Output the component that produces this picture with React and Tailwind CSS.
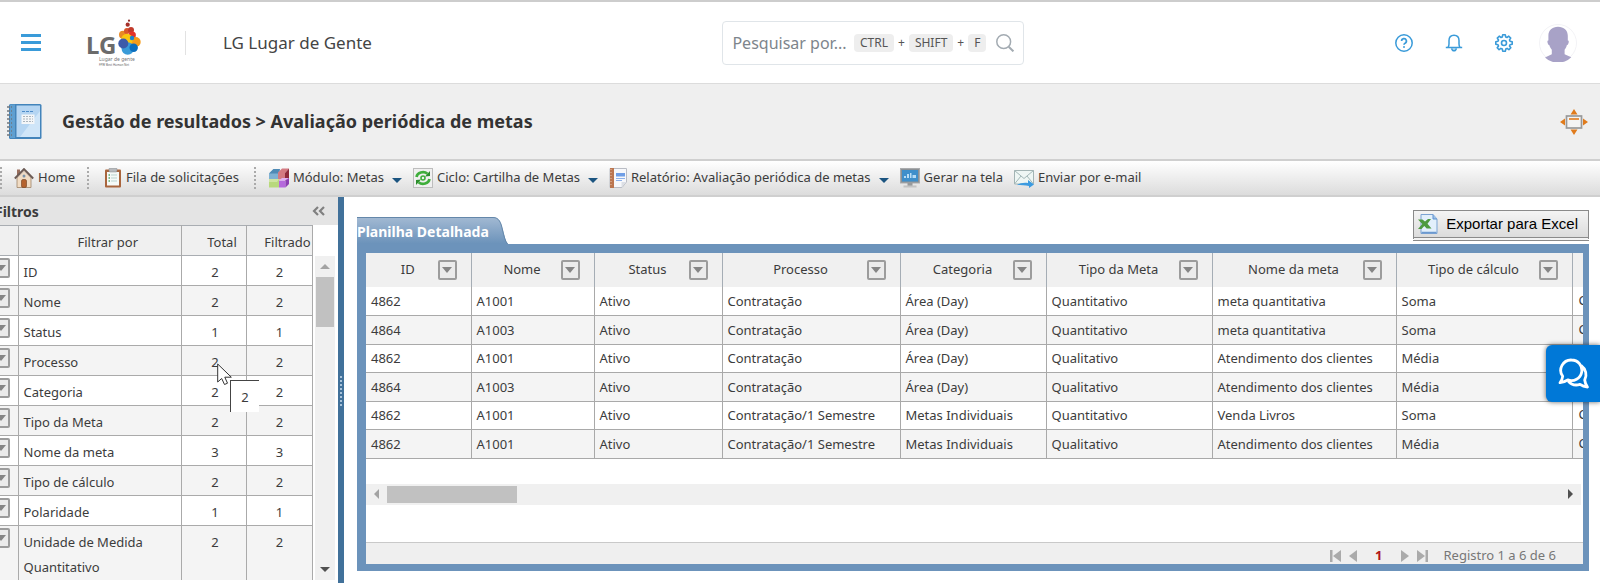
import React, { useState } from 'react';

const filtros = [
    { nome: 'ID', total: 2, filtrado: 2 },
    { nome: 'Nome', total: 2, filtrado: 2 },
    { nome: 'Status', total: 1, filtrado: 1 },
    { nome: 'Processo', total: 2, filtrado: 2 },
    { nome: 'Categoria', total: 2, filtrado: 2 },
    { nome: 'Tipo da Meta', total: 2, filtrado: 2 },
    { nome: 'Nome da meta', total: 3, filtrado: 3 },
    { nome: 'Tipo de cálculo', total: 2, filtrado: 2 },
    { nome: 'Polaridade', total: 1, filtrado: 1 },
    { nome: 'Unidade de Medida Quantitativo', total: 2, filtrado: 2 },
];

const colunas = [
    { nome: 'ID', largura: 'w-[105px]' },
    { nome: 'Nome', largura: 'w-[123px]' },
    { nome: 'Status', largura: 'w-[128px]' },
    { nome: 'Processo', largura: 'w-[178px]' },
    { nome: 'Categoria', largura: 'w-[146px]' },
    { nome: 'Tipo da Meta', largura: 'w-[166px]' },
    { nome: 'Nome da meta', largura: 'w-[184px]' },
    { nome: 'Tipo de cálculo', largura: 'w-[176px]' },
];

const linhas = [
    ['4862', 'A1001', 'Ativo', 'Contratação', 'Área (Day)', 'Quantitativo', 'meta quantitativa', 'Soma'],
    ['4864', 'A1003', 'Ativo', 'Contratação', 'Área (Day)', 'Quantitativo', 'meta quantitativa', 'Soma'],
    ['4862', 'A1001', 'Ativo', 'Contratação', 'Área (Day)', 'Qualitativo', 'Atendimento dos clientes', 'Média'],
    ['4864', 'A1003', 'Ativo', 'Contratação', 'Área (Day)', 'Qualitativo', 'Atendimento dos clientes', 'Média'],
    ['4862', 'A1001', 'Ativo', 'Contratação/1 Semestre', 'Metas Individuais', 'Quantitativo', 'Venda Livros', 'Soma'],
    ['4862', 'A1001', 'Ativo', 'Contratação/1 Semestre', 'Metas Individuais', 'Qualitativo', 'Atendimento dos clientes', 'Média'],
];

/* ---------- Ícones ---------- */

const Logo = () => (
    <svg width="54" height="50" viewBox="0 0 54 50" role="img" aria-label="LG Lugar de Gente">
        <text x="-1" y="36" fontFamily="Noto Sans, sans-serif" fontWeight="700" fontSize="24" fill="#6b6b6b">LG</text>
        <circle cx="42" cy="2.700" r="1.100" fill="#8e2a25" />
        <circle cx="40.700" cy="6.700" r="2.100" fill="#a5302a" />
        <circle cx="36" cy="16.700" r="4" fill="#e98a24" />
        <circle cx="40" cy="13" r="3" fill="#d9562b" />
        <circle cx="44" cy="12" r="3" fill="#c23b2c" />
        <circle cx="45.300" cy="17" r="3.600" fill="#e6332a" />
        <circle cx="48.700" cy="24" r="5" fill="#f59c1a" />
        <circle cx="40" cy="21.500" r="5.800" fill="#fbc70f" />
        <circle cx="40.700" cy="30.500" r="6.200" fill="#3a9bd8" />
        <circle cx="36.300" cy="25.500" r="5" fill="#3d5ba9" />
        <circle cx="46.700" cy="29.700" r="4.200" fill="#0a6ebd" />
        <circle cx="45" cy="20" r="2.200" fill="#1b87cf" />
        <text x="12" y="43" fontFamily="Noto Sans, sans-serif" fontSize="5" fill="#777">Lugar de gente</text>
        <text x="12" y="48" fontFamily="Noto Sans, sans-serif" fontSize="3" fill="#666">FPW Best Human Net</text>
    </svg>
);

const HelpIcon = () => (
    <svg width="18" height="18" viewBox="0 0 18 18" fill="none" stroke="#3a9bd9" strokeWidth="1.500">
        <circle cx="9" cy="9" r="8.200" />
        <path d="M6.600 7.100a2.400 2.400 0 1 1 3.500 2.100c-.8.4-1.100.8-1.100 1.500" strokeWidth="1.700" />
        <path d="M9 12.200v1.600" strokeWidth="1.900" />
    </svg>
);

const BellIcon = () => (
    <svg width="18" height="18" viewBox="0 0 18 18" fill="none" stroke="#3a9bd9" strokeWidth="1.500">
        <path d="M.8 13.600h16.400M3 13.400c.7-1 1-2 1-3.400V6.500C4 3 6 1.200 9 1.200s5 1.800 5 5.300V10c0 1.400.3 2.400 1 3.400" />
        <path d="M6.600 14.300c.3 1.500 1.200 2.500 2.400 2.500s2.100-1 2.400-2.500" fill="#3a9bd9" fillOpacity=".4" />
    </svg>
);

const GearIcon = () => (
    <svg width="18" height="18" viewBox="0 0 18 18" fill="none" stroke="#3a9bd9" strokeWidth="1.600" strokeLinejoin="round">
        <circle cx="9" cy="9" r="2.500" />
        <path d="M7.700.8h2.600l.4 2.200 1.300.5 1.800-1.300 1.900 1.900-1.200 1.800.5 1.300 2.200.5v2.600l-2.200.4-.5 1.300 1.300 1.800-1.900 1.900-1.800-1.300-1.300.6-.5 2.200H7.700l-.4-2.200-1.400-.6-1.800 1.300-1.900-1.900L3.500 12 3 10.700l-2.200-.4V7.700L3 7.300 3.500 6 2.300 4.100l1.900-1.900L6 3.500 7.300 3z" />
    </svg>
);

const Avatar = () => (
    <svg width="38" height="38" viewBox="0 0 38 38">
        <circle cx="19" cy="19" r="18.500" fill="#fff" stroke="#f3f3f6" />
        <path d="M19 2.700c-6 0-9.800 3.800-9.600 9.500v4.300c-1 0-1.200 1-.8 2.300.4 1.500.9 2.300 1.800 2.500.6 2 1.400 3.400 2.400 4.500v4.500L6 33.400A19 19 0 0 0 32.300 33.200L25.600 30.300v-4.500c1-1.100 1.700-2.500 2.200-4.500.9-.2 1.400-1 1.800-2.500.4-1.300.2-2.300-.8-2.300v-4.300C29 6.500 25 2.700 19 2.700z" fill="#a8a2c7" />
    </svg>
);

const NotebookIcon = () => (
    <svg width="36" height="37" viewBox="0 0 36 37">
        <rect x="3" y="1" width="32.500" height="35" rx="1.500" fill="#4384bb" />
        <rect x="4" y="1.500" width="5" height="33.500" fill="#5f9fd0" />
        <rect x="10.500" y="2.500" width="23.500" height="31.500" fill="#b5d5f2" />
        <path d="M34 8v26H14z" fill="#cfe5f8" />
        <path d="M16 8.500h12" stroke="#4f8cc9" strokeDasharray="3 1" />
        <rect x="15.500" y="11.500" width="13" height="9.500" fill="#f4f6f8" />
        <path d="M17 13.500h10M17 16h10M17 18.500h10" stroke="#a9b4bd" strokeDasharray="2 1" />
        <path d="M1 4h5M1 8h5M1 12h5M1 16h5M1 20h5M1 24h5M1 28h5M1 32h5" stroke="#70777d" strokeWidth="1.600" strokeDasharray="3 1" />
    </svg>
);

const ExpandIcon = () => (
    <svg width="28" height="26" viewBox="0 0 28 26">
        <path d="M14 0l3.500 5.500h-7zM14 26l3.500-5.500h-7zM0 13l5-3.500v7zM28 13l-5-3.500v7z" fill="#e07b1c" />
        <rect x="6.500" y="7" width="15" height="12" fill="#f4f4f4" stroke="#999" strokeWidth="1.700" />
        <path d="M9 10h10" stroke="#e07b1c" strokeWidth="1.600" />
    </svg>
);

const HouseIcon = () => (
    <svg width="20" height="20" viewBox="0 0 20 20">
        <path d="M3 1.500h3V7H3z" fill="#9a6f5e" />
        <path d="M3 10l7-7.500L17 10v9.500H3z" fill="#f1dcc4" stroke="#a08468" strokeWidth=".8" />
        <path d="M.8 10.500L10 1l9.200 9.500" fill="none" stroke="#6b5a54" strokeWidth="1.800" />
        <path d="M4 9.500l6-6 6 6" fill="none" stroke="#d8cdc6" strokeWidth=".8" />
        <rect x="7.500" y="11.500" width="5" height="8" rx="1.500" fill="#b5622d" stroke="#71401e" strokeWidth=".6" />
        <circle cx="10" cy="8" r="1.500" fill="#7c93a8" />
    </svg>
);

const ClipboardIcon = () => (
    <svg width="18" height="20" viewBox="0 0 18 20">
        <rect x="1" y="1.500" width="16" height="18" rx="1" fill="#a9653d" />
        <rect x="3" y="4" width="12" height="13.500" fill="#f6faf8" />
        <rect x="5" y="0" width="8" height="4" rx="1" fill="#b8babd" stroke="#85888c" strokeWidth=".5" />
        <path d="M4.500 7h1.500M4.500 10h1.500M4.500 13h1.500" stroke="#5aa96a" strokeWidth="1.300" />
        <path d="M7 7h6M7 10h6M7 13h6" stroke="#b9d3cf" />
    </svg>
);

const CubesIcon = () => (
    <svg width="20" height="20" viewBox="0 0 20 20">
        <path d="M0 5.500L4.500 1H11v10H0z" fill="#7fb1d3" />
        <path d="M0 5.500L4.500 1H11l-2 4.500z" fill="#4f8ab5" />
        <path d="M9 4.500L13 .5h7L16 5v6.500H9z" fill="#d47a82" />
        <path d="M16 5l4-4.500V10l-4 3z" fill="#8f2a3c" />
        <path d="M0 11h10v8.500H0z" fill="#b8d97c" />
        <path d="M0 11h10l-2 3H0z" fill="#cfe5a3" />
        <path d="M10 12.500h6.500v7H10z" fill="#b569dc" />
        <path d="M10 12.500l3-2.500h7l-3.500 2.500z" fill="#e0b0f2" />
        <path d="M16.500 12.500L20 10v6l-3.500 3.500z" fill="#8e3fb4" />
    </svg>
);

const CycleIcon = () => (
    <svg width="20" height="20" viewBox="0 0 20 20" fill="none">
        <rect x=".5" y=".5" width="19" height="19" fill="#f0f0f0" stroke="#bdbdbd" />
        <path d="M3.500 9A6.500 5.500 0 0 1 14.500 5.800M16.500 11A6.500 5.500 0 0 1 5.500 14.200" stroke="#3fae3b" strokeWidth="2.600" />
        <path d="M12 8.500l5-.5V3zM8 11.500L3 12v5z" fill="#2c8d2c" />
        <circle cx="10" cy="10" r="2" stroke="#3fae3b" strokeWidth="1.600" />
    </svg>
);

const ReportIcon = () => (
    <svg width="18" height="20" viewBox="0 0 18 20">
        <path d="M1 .5h16.500V14L13 19.500H1z" fill="#f7f8fb" stroke="#b9bcc4" />
        <rect x="1" y="0" width="4" height="20" fill="#bb7650" />
        <path d="M2 1v18" stroke="#e6c2a9" strokeDasharray="1 2" />
        <rect x="7" y="5" width="9" height="3.500" fill="#6f9ee6" />
        <path d="M7 10.500h9M7 12.500h6" stroke="#8db1ea" />
        <path d="M12.500 19.500V14h5z" fill="#dcdfe5" />
    </svg>
);

const MonitorIcon = () => (
    <svg width="20" height="20" viewBox="0 0 20 20">
        <rect x=".5" y=".5" width="19" height="14.500" fill="#8c9094" stroke="#a9abad" />
        <rect x="2" y="2" width="16" height="11.500" fill="#3f8fcb" />
        <path d="M4 10V8h2v2zM7 10V6h2v4zM10 10V5h1.500v5zM12.500 10V7H16v3z" fill="#b8dcf5" />
        <path d="M7.500 15h5v3h-5z" fill="#97999b" />
        <path d="M3.500 18.500h13" stroke="#c3c3c3" strokeWidth="2" />
    </svg>
);

const MailIcon = () => (
    <svg width="20" height="20" viewBox="0 0 20 20">
        <path d="M.5 2.500h19V16H.5z" fill="#eef6f4" stroke="#a3b4b4" />
        <path d="M.5 2.500l9.500 8 9.500-8M.5 16l6.500-8M19.500 16L13 8" fill="none" stroke="#a3b8b8" />
        <path d="M3 17c3-2 7-2.500 11-2v-3l6 4.500-5 3.500v-2c-4-.8-8-.8-12-1z" fill="#3c9be0" />
    </svg>
);

const ExcelIcon = () => (
    <svg width="20" height="20" viewBox="0 0 20 20">
        <path d="M3 .5h12L19 5v14.500H3z" fill="#e2effb" stroke="#7ba3d3" />
        <path d="M15 .5V5h4" fill="#9fc1e8" stroke="#5f93cf" />
        <path d="M3.500 18.500h15" stroke="#6c99cf" strokeWidth="1.500" />
        <path d="M0 5.500h4.500l2.500 2 3-2.500h3L9.500 9.800l4 4.700H8.700L6.300 12 3.500 15H0l4.300-5z" fill="#4d9a3f" />
    </svg>
);

const ChatIcon = () => (
    <svg width="32" height="32" viewBox="0 0 32 32" fill="none" stroke="#fff" strokeWidth="2.800" strokeLinejoin="round">
        <path d="M13.500 2a10.300 10.300 0 1 1-3.700 19.900c-2 1.400-4.500 2.300-7.800 2.800 1.600-2.200 2.600-4.200 2.700-6.400A10.300 10.300 0 0 1 13.500 2z" />
        <path d="M23 7.500c5 3.700 6.300 9.500 3.700 14.500.3 2.700 1.200 5 2.800 7-2.800-.2-5.300-1-7.500-2.600-4.500 1.300-8.800.4-12-3.600" />
    </svg>
);

/* ---------- Componentes ---------- */

const FilterButton = ({ label }) => (
    <button
        aria-label={label}
        className="flex h-5 w-[19px] shrink-0 items-center justify-center rounded-xs border-2 border-[#9c9c9c] bg-[#ebebeb]"
    >
        <span className="border-x-[5px] border-t-[6px] border-x-transparent border-t-[#858585]" />
    </button>
);

const ToolbarItem = ({ icon: Icon, label, menu }) => (
    <button className="flex items-center gap-1 whitespace-nowrap">
        <Icon />
        <span>{label}</span>
        {menu && <span className="ml-1 mt-1 border-x-[5px] border-t-[5px] border-x-transparent border-t-[#1b5480]" />}
    </button>
);

const Separator = () => <span className="h-[22px] border-l-2 border-dotted border-[#aaa]" />;

const Header = () => (
    <header className="flex h-[84px] items-center border-t-2 border-b border-t-[#cdcdcd] border-b-[#dcdcdc] bg-white pl-[21px] pr-[23px] shadow-sm">
        <button aria-label="Menu" className="flex w-5 flex-col gap-1">
            <span className="h-[3px] bg-[#3a9bd9]" />
            <span className="h-[3px] bg-[#3a9bd9]" />
            <span className="h-[3px] bg-[#3a9bd9]" />
        </button>
        <div className="ml-[46px]">
            <Logo />
        </div>
        <div className="ml-11 h-6 w-px bg-[#e2e2e2]" />
        <span className="ml-[37px] text-[17px] text-[#444]">LG Lugar de Gente</span>

        <label className="ml-auto flex h-11 w-[302px] items-center rounded border border-[#e0e5e9] px-[9px]">
            <input
                aria-label="Pesquisar"
                placeholder="Pesquisar por..."
                className="min-w-0 flex-1 text-[16px] text-[#6c757d] outline-none placeholder:text-[#7d858c]"
            />
            <span className="flex items-center gap-1 text-[12px] text-[#555]">
                <kbd className="rounded bg-[#eee] px-1.5 font-[inherit]">CTRL</kbd>+
                <kbd className="rounded bg-[#eee] px-1.5 font-[inherit]">SHIFT</kbd>+
                <kbd className="rounded bg-[#eee] px-1.5 font-[inherit]">F</kbd>
            </span>
            <svg width="18" height="18" viewBox="0 0 18 18" className="ml-2.5" fill="none" stroke="#a3abb2" strokeWidth="1.500">
                <circle cx="7.700" cy="7.700" r="6.900" />
                <path d="M12.700 12.700l4.700 4.700" strokeWidth="2" />
            </svg>
        </label>

        <div className="ml-auto flex items-center gap-8 pl-5">
            <button aria-label="Ajuda"><HelpIcon /></button>
            <button aria-label="Notificações"><BellIcon /></button>
            <button aria-label="Configurações"><GearIcon /></button>
            <button aria-label="Perfil" className="-ml-1.5"><Avatar /></button>
        </div>
    </header>
);

const Sidebar = () => (
    <aside className="relative w-[338px] shrink-0 overflow-hidden">
        {/* O painel começa um pouco além da borda esquerda da janela */}
        <div className="-ml-[9px]">
            <div className="flex h-7 items-center justify-between bg-[#e4e4e4] pl-1 pr-[13px]">
                <h2 className="text-[14px] font-bold">Filtros</h2>
                <button aria-label="Recolher filtros">
                    <svg width="13" height="10" viewBox="0 0 13 10" fill="none" stroke="#808080" strokeWidth="2.200">
                        <path d="M6 1L2 5l4 4M12 1L8 5l4 4" />
                    </svg>
                </button>
            </div>
            <div className="flex">
                <table className="w-[322px] table-fixed border-collapse">
                    <thead>
                        <tr className="h-[30px] border-y border-[#a9adb2] bg-[#f0f0f0]">
                            <th className="w-[27px] border-r border-[#aaa]"><span className="sr-only">Opções</span></th>
                            <th className="border-r border-[#aaa] pl-4 pt-1 font-normal">Filtrar por</th>
                            <th className="w-[65px] border-r border-[#aaa] pl-4 pt-1 font-normal">Total</th>
                            <th className="w-[66px] border-r border-[#aaa] pl-4 pt-1 font-normal">Filtrado</th>
                        </tr>
                    </thead>
                    <tbody>
                        {filtros.map((f) => (
                            <tr key={f.nome} className="h-[30px] border-b border-[#aaa] align-top leading-[25px] even:bg-[#f4f4f4] last:border-0">
                                <td className="border-r border-[#aaa] pt-0.5"><FilterButton label={`Filtrar ${f.nome}`} /></td>
                                <td className="border-r border-[#aaa] pl-[5px] pt-1">{f.nome}</td>
                                <td className="border-r border-[#aaa] pl-0.5 pt-1 text-center">{f.total}</td>
                                <td className="border-r border-[#aaa] pt-1 text-center">{f.filtrado}</td>
                            </tr>
                        ))}
                    </tbody>
                </table>
                <div className="ml-0.5 mt-[31px] flex w-5 flex-col items-center bg-[#f0f0f0] py-2">
                    <span className="border-x-[5px] border-b-[5px] border-x-transparent border-b-[#a3a3a3]" />
                    <span className="mt-2 h-[50px] w-[18px] bg-[#c1c1c1]" />
                    <span className="mt-auto border-x-[5px] border-t-[5px] border-x-transparent border-t-[#505050]" />
                </div>
            </div>
        </div>

        {/* Cursor e dica flutuante */}
        <svg className="absolute left-[217px] top-[166px]" width="16" height="23" viewBox="0 0 16 23">
            <path d="M.7 1v18l4-3.500 2.800 6 3-1.300-2.700-6h6.500z" fill="#fff" stroke="#333" />
        </svg>
        <div role="tooltip" className="absolute left-[230px] top-[183px] h-8 w-[29px] border-l border-t border-[#444] bg-white text-center leading-8">
            2
        </div>
    </aside>
);

const Planilha = () => (
    <main className="flex min-w-0 flex-1 flex-col pb-3 pl-[13px] pr-[11px]">
        <div className="flex h-[47px] items-end justify-between">
            <div className="relative flex h-[27px] w-[151px] items-center pt-0.5">
                <svg className="absolute inset-0" width="151" height="27" viewBox="0 0 151 27">
                    <defs>
                        <linearGradient id="aba" x1="0" y1="0" x2="0" y2="1">
                            <stop offset="0" stopColor="#a3bad3" />
                            <stop offset="1" stopColor="#6b92ba" />
                        </linearGradient>
                    </defs>
                    <path d="M0 0h136c6 0 8 5 10 13 1.500 6 2.500 11 5 14H0z" fill="url(#aba)" />
                    <path d="M0 .5h136c6 0 8 5 9.500 12.500 1.500 6 2.500 11 5 14" fill="none" stroke="#6487aa" />
                </svg>
                <h2 className="relative whitespace-nowrap text-[14px] font-bold text-white">Planilha Detalhada</h2>
            </div>
            <button className="mb-[3px] flex h-[31px] items-center gap-2 border border-b-4 border-double border-[#8a8a8a] bg-linear-to-b from-[#f4f4f4] to-[#dcdcdc] pl-1 pr-2.5 font-['Liberation_Sans',sans-serif] text-[15px] text-black">
                <ExcelIcon />
                Exportar para Excel
            </button>
        </div>

        <div className="flex h-[327px] flex-col border-[#6c93bb] border-b-[7px] border-l-[9px] border-r-[6px] border-t-[9px] bg-white">
            <div className="overflow-hidden">
                <table className="w-[1400px] table-fixed border-collapse">
                    <thead>
                        <tr className="h-[34px] bg-[#f0f0f0]">
                            {colunas.map((c) => (
                                <th key={c.nome} className={`${c.largura} border-r border-[#a5adb5] p-0 pl-3 pr-3.5 font-normal`}>
                                    <span className="flex items-center">
                                        <span className="flex-1">{c.nome}</span>
                                        <FilterButton label={`Filtrar ${c.nome}`} />
                                    </span>
                                </th>
                            ))}
                            <th />
                        </tr>
                    </thead>
                    <tbody>
                        {linhas.map((linha, i) => (
                            <tr key={i} className="h-7 border-b border-[#a9a9a9] even:h-[29px] even:bg-[#f4f4f4]">
                                {linha.map((valor, j) => (
                                    <td key={j} className="whitespace-nowrap border-r border-[#a9a9a9] p-0 pl-[5px] pt-0.5">{valor}</td>
                                ))}
                                <td className="p-0 pl-1.5">Crescente</td>
                            </tr>
                        ))}
                    </tbody>
                </table>
            </div>

            <div className="mr-0.5 mt-[25px] flex h-[21px] items-center bg-[#f0f0f0] pl-2 pr-2">
                <span className="border-y-[5px] border-r-[5px] border-y-transparent border-r-[#a3a3a3]" />
                <span className="ml-2 h-[17px] w-[130px] bg-[#c1c1c1]" />
                <span className="ml-auto border-y-[5px] border-l-[5px] border-y-transparent border-l-[#505050]" />
            </div>

            <footer className="mt-auto flex h-[22px] items-center justify-end border-t border-[#c9c9c9] bg-[#efefef] pr-[27px] pt-1 text-[#777]">
                <button aria-label="Primeira página">
                    <svg width="11" height="12" viewBox="0 0 11 12" fill="#aaa"><path d="M0 0h2.500v12H0zM11 0v12L3 6z" /></svg>
                </button>
                <button aria-label="Página anterior" className="ml-2">
                    <svg width="8" height="12" viewBox="0 0 8 12" fill="#aaa"><path d="M8 0v12L0 6z" /></svg>
                </button>
                <span className="mx-[18px] font-bold text-[#b01515]">1</span>
                <button aria-label="Próxima página">
                    <svg width="8" height="12" viewBox="0 0 8 12" fill="#aaa"><path d="M0 0v12l8-6z" /></svg>
                </button>
                <button aria-label="Última página" className="ml-2">
                    <svg width="11" height="12" viewBox="0 0 11 12" fill="#aaa"><path d="M8.500 0H11v12H8.500zM0 0v12l8-6z" /></svg>
                </button>
                <span className="ml-4">Registro 1 a 6 de 6</span>
            </footer>
        </div>
    </main>
);

const App = () => {
    const [chatAberto, setChatAberto] = useState(false);

    return (
        <div className="flex h-screen flex-col overflow-hidden bg-white font-['Noto_Sans','Open_Sans',sans-serif] text-[13px] text-[#3c3c3c]">
            <Header />

            <div className="flex h-[75px] shrink-0 items-center bg-[#efefef] pl-1.5 pr-3">
                <NotebookIcon />
                <h1 className="ml-5 text-[18px] font-bold text-[#333]">Gestão de resultados &gt; Avaliação periódica de metas</h1>
                <button aria-label="Expandir tela" className="ml-auto"><ExpandIcon /></button>
            </div>

            <nav className="flex h-[38px] shrink-0 items-center border-b-2 border-t-2 border-[#cfcfcf] bg-linear-to-b from-white to-[#dcdcdc]">
                <Separator />
                <div className="px-3"><ToolbarItem icon={HouseIcon} label="Home" /></div>
                <Separator />
                <div className="px-[15px]"><ToolbarItem icon={ClipboardIcon} label="Fila de solicitações" /></div>
                <Separator />
                <div className="flex gap-[11px] pl-[13px]">
                    <ToolbarItem icon={CubesIcon} label="Módulo: Metas" menu />
                    <ToolbarItem icon={CycleIcon} label="Ciclo: Cartilha de Metas" menu />
                    <ToolbarItem icon={ReportIcon} label="Relatório: Avaliação periódica de metas" menu />
                    <ToolbarItem icon={MonitorIcon} label="Gerar na tela" />
                    <ToolbarItem icon={MailIcon} label="Enviar por e-mail" />
                </div>
            </nav>

            <div className="flex min-h-0 flex-1">
                <Sidebar />
                <div className="flex w-1.5 shrink-0 flex-col items-center bg-[#41719a] pt-[179px]">
                    <span className="h-[30px] border-l-2 border-dotted border-[#a9c3da]" />
                </div>
                <Planilha />
            </div>

            <button
                aria-label="Abrir chat"
                aria-expanded={chatAberto}
                onClick={() => setChatAberto(!chatAberto)}
                className="fixed right-0 top-[345px] flex h-[57px] w-[54px] items-center justify-center rounded-l-md bg-[#0078d7] pl-0.5 shadow-[0_0_5px_rgba(0,0,0,0.6)]"
            >
                <ChatIcon />
            </button>
        </div>
    );
};

export default App;
